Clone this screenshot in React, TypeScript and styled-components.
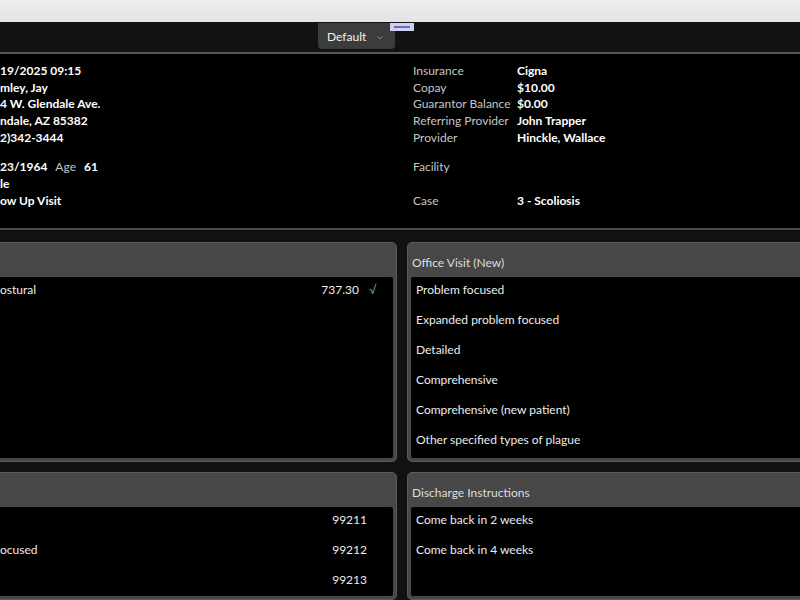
import React from 'react';
import styled, { createGlobalStyle } from 'styled-components';

const GlobalStyle = createGlobalStyle`
  html, body {
    margin: 0;
    padding: 0;
    background: #111111;
    overflow: hidden;
  }
  body {
    font-family: Lato, "Noto Sans", Arial, sans-serif;
    color: #e6e6e6;
  }
`;

const Screen = styled.div`
  width: 800px;
  height: 600px;
  display: flex;
  flex-direction: column;
  overflow: hidden;
`;

const TitleStrip = styled.div`
  flex-shrink: 0;
  height: 22px;
  background: linear-gradient(#ededed, #e4e4e4);
`;

const Toolbar = styled.div`
  flex-shrink: 0;
  height: 30px;
  background: #121212;
  border-bottom: 2px solid #575757;
  display: flex;
  padding-left: 318px;
`;

const DropdownWrap = styled.div`
  position: relative;
  align-self: flex-start;
`;

const Dropdown = styled.div`
  width: 77px;
  height: 26px;
  margin-top: 1px;
  box-sizing: border-box;
  background: #3c3c3c;
  border-radius: 0 0 4px 4px;
  display: flex;
  align-items: center;
  padding: 0 12px 0 9px;
  font-size: 12px;
  color: #f2f2f2;
`;

const Chevron = styled.svg`
  margin-left: auto;
  width: 6px;
  height: 4px;
  margin-top: 3px;
`;

const Minimize = styled.div`
  position: absolute;
  top: 1px;
  left: 72px;
  width: 24px;
  height: 8px;
  background: #cfcff6;
  display: flex;
  align-items: center;
  justify-content: center;
  &::after {
    content: '';
    width: 16px;
    height: 2px;
    background: #6e6ea8;
  }
`;

const InfoArea = styled.div`
  flex-shrink: 0;
  height: 176px;
  background: #000;
  border-bottom: 2px solid #4a4a4a;
  display: grid;
  grid-template-columns: 413px 1fr;
  padding-top: 8px;
  box-sizing: border-box;
  font-size: 12px;
`;

const InfoGrid = styled.div<{ $labelWidth?: number }>`
  display: grid;
  grid-template-columns: ${({ $labelWidth }) => ($labelWidth ? `${$labelWidth}px 1fr` : '1fr')};
  grid-template-rows: 16.7px 16.7px 16.7px 16.7px 16.7px 13px 16.7px 16.7px 16.7px;
  align-items: center;
`;

const Label = styled.span`
  color: #c6c6c6;
  white-space: nowrap;
`;

const Value = styled.span`
  color: #ffffff;
  font-weight: 700;
  white-space: nowrap;
`;

const Inline = styled.span`
  display: flex;
  gap: 8px;
  align-items: baseline;
`;

const Panels = styled.div`
  flex: 1;
  min-height: 0;
  display: grid;
  grid-template-columns: 407px 1fr;
  grid-template-rows: 220px 1fr;
  gap: 10px;
  margin-left: -10px;
  width: 830px;
  padding-top: 12px;
`;

const Panel = styled.section`
  background: #474747;
  border: 1px solid #5a5a5a;
  border-radius: 5px;
  padding: 0 3px 3px 3px;
  display: flex;
  flex-direction: column;
  min-height: 0;
`;

const PanelHeader = styled.div`
  flex-shrink: 0;
  height: 34px;
  box-sizing: border-box;
  padding: 12px 1px 0;
  font-size: 12px;
  color: #dedede;
`;

const PanelBody = styled.div<{ $indent?: number }>`
  flex: 1;
  background: #000;
  border-radius: 2px;
  padding: 5px 0 0 ${({ $indent }) => $indent ?? 5}px;
  overflow: hidden;
`;

const Row = styled.div<{ $trail?: number }>`
  height: 30px;
  display: flex;
  align-items: flex-start;
  font-size: 12px;
  color: #ececec;
  line-height: 16px;
  padding-right: ${({ $trail }) => $trail ?? 0}px;
`;

const Code = styled.span`
  margin-left: auto;
`;

const Check = styled.span`
  color: #5aa6a6;
  width: 16px;
  padding-left: 10px;
  box-sizing: border-box;
`;

const rightInfo: [string, string, number][] = [
  ['Insurance', 'Cigna', 1],
  ['Copay', '$10.00', 2],
  ['Guarantor Balance', '$0.00', 3],
  ['Referring Provider', 'John Trapper', 4],
  ['Provider', 'Hinckle, Wallace', 5],
  ['Facility', '', 7],
  ['Case', '3 - Scoliosis', 9],
];

const officeVisit = [
  'Problem focused',
  'Expanded problem focused',
  'Detailed',
  'Comprehensive',
  'Comprehensive (new patient)',
  'Other specified types of plague',
];

const established: [string, string][] = [
  ['', '99211'],
  ['ocused', '99212'],
  ['', '99213'],
];

export default function App() {
  return (
    <Screen>
      <GlobalStyle />
      <TitleStrip />
      <Toolbar>
        <DropdownWrap>
          <Dropdown>
            Default
            <Chevron viewBox="0 0 6 4">
              <path d="M0.5 0.5 L3 3 L5.5 0.5" fill="none" stroke="#8a8a8a" strokeWidth="1" />
            </Chevron>
          </Dropdown>
          <Minimize />
        </DropdownWrap>
      </Toolbar>
      <InfoArea>
        <InfoGrid>
          <Value>19/2025 09:15</Value>
          <Value>mley, Jay</Value>
          <Value>4 W. Glendale Ave.</Value>
          <Value>ndale, AZ 85382</Value>
          <Value>2)342-3444</Value>
          <span />
          <Inline>
            <Value>23/1964</Value>
            <Label>Age</Label>
            <Value>61</Value>
          </Inline>
          <Value>le</Value>
          <Value>ow Up Visit</Value>
        </InfoGrid>
        <InfoGrid $labelWidth={104}>
          {rightInfo.map(([label, value, row]) => (
            <React.Fragment key={label}>
              <Label style={{ gridRow: row }}>{label}</Label>
              <Value style={{ gridRow: row }}>{value}</Value>
            </React.Fragment>
          ))}
        </InfoGrid>
      </InfoArea>
      <Panels>
        <Panel>
          <PanelHeader />
          <PanelBody $indent={6}>
            <Row $trail={18}>
              <span>ostural</span>
              <Code>737.30</Code>
              <Check>√</Check>
            </Row>
          </PanelBody>
        </Panel>
        <Panel>
          <PanelHeader>Office Visit (New)</PanelHeader>
          <PanelBody>
            {officeVisit.map((item) => (
              <Row key={item}>{item}</Row>
            ))}
          </PanelBody>
        </Panel>
        <Panel>
          <PanelHeader />
          <PanelBody $indent={6}>
            {established.map(([name, code]) => (
              <Row key={code} $trail={26}>
                <span>{name}</span>
                <Code>{code}</Code>
              </Row>
            ))}
          </PanelBody>
        </Panel>
        <Panel>
          <PanelHeader>Discharge Instructions</PanelHeader>
          <PanelBody>
            <Row>Come back in 2 weeks</Row>
            <Row>Come back in 4 weeks</Row>
          </PanelBody>
        </Panel>
      </Panels>
    </Screen>
  );
}
